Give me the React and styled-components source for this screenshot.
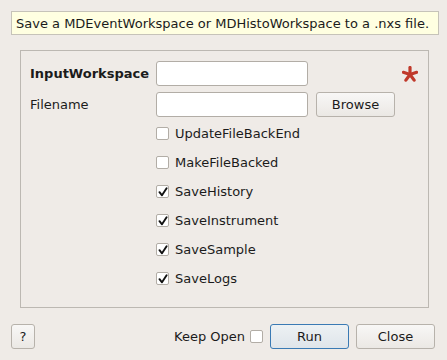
import React from "react";
import styled, { createGlobalStyle } from "styled-components";

const Global = createGlobalStyle`
  html, body { margin: 0; padding: 0; background: #efebe7; }
  body { font-family: "DejaVu Sans", "Liberation Sans", sans-serif; font-size: 13px; color: #1b1b1b; }
`;

const Dialog = styled.div`
  width: 447px;
  height: 360px;
  box-sizing: border-box;
  padding: 11px 9px 0 11px;
  display: flex;
  flex-direction: column;
`;

const Banner = styled.div`
  height: 24px;
  box-sizing: border-box;
  border: 1px solid #c6c3b9;
  background: #ffffe1;
  display: flex;
  align-items: center;
  padding-left: 4px;
  white-space: nowrap;
  margin-right: -1px;
`;

const Group = styled.div`
  margin: 15px 9px 0 9px;
  height: 258px;
  box-sizing: border-box;
  border: 1px solid #bcb8b2;
  padding: 10px 0 0 9px;
  display: flex;
  flex-direction: column;
`;

const FieldRow = styled.div`
  height: 25px;
  display: flex;
  align-items: center;
  margin-bottom: ${(p) => p.$gap || 0}px;
`;

const Label = styled.div`
  width: 126px;
  font-weight: ${(p) => (p.$bold ? 700 : 400)};
  white-space: nowrap;
`;

const TextInput = styled.div`
  width: 152px;
  height: 25px;
  box-sizing: border-box;
  border: 1px solid #b2ada6;
  border-radius: 3px;
  background: #ffffff;
`;

const Button = styled.button`
  width: ${(p) => p.$w || 79}px;
  height: 25px;
  box-sizing: border-box;
  border: 1px solid ${(p) => (p.$primary ? "#3a7ab4" : "#b7b2ab")};
  border-radius: 3px;
  background: ${(p) =>
    p.$primary
      ? "linear-gradient(#edf1f4, #dfe5ea)"
      : "linear-gradient(#f8f7f6, #ebe8e4)"};
  font-family: "DejaVu Sans", "Liberation Sans", sans-serif;
  font-size: 13px;
  color: #1b1b1b;
  padding: 0;
  margin-left: ${(p) => p.$ml || 0}px;
`;

const Star = styled.svg`
  margin-left: 6px;
  width: 16px;
  height: 16px;
`;

const CheckRow = styled.div`
  height: 23px;
  display: flex;
  align-items: center;
  padding-left: 126px;
  margin-top: ${(p) => p.$mt || 6}px;
  gap: 6px;
`;

const Box = styled.div`
  width: 13px;
  height: 13px;
  box-sizing: border-box;
  border: 1px solid #b2ada6;
  border-radius: 2px;
  background: #ffffff;
  display: flex;
  align-items: center;
  justify-content: center;
`;

const Footer = styled.div`
  margin-top: 16px;
  display: flex;
  align-items: center;
  padding-right: 3px;
`;

const Spacer = styled.div`
  flex: 1;
`;

const KeepLabel = styled.span`
  margin-right: 5px;
`;

function Check({ checked }) {
  return (
    <Box>
      {checked && (
        <svg width="10" height="10" viewBox="0 0 10 10">
          <path d="M1.5 5.2 L4 8.3 L8.6 1.2" fill="none" stroke="#111" strokeWidth="1.9" strokeLinecap="round" strokeLinejoin="round" />
        </svg>
      )}
    </Box>
  );
}

const checks = [
  ["UpdateFileBackEnd", false],
  ["MakeFileBacked", false],
  ["SaveHistory", true],
  ["SaveInstrument", true],
  ["SaveSample", true],
  ["SaveLogs", true],
];

export default function App() {
  return (
    <>
      <Global />
      <Dialog>
        <Banner>Save a MDEventWorkspace or MDHistoWorkspace to a .nxs file.</Banner>
        <Group>
          <FieldRow $gap={6}>
            <Label $bold>InputWorkspace</Label>
            <TextInput />
            <Spacer />
            <Star viewBox="0 0 16 16" style={{ marginRight: 10 }}>
              {[0, 72, 144, 216, 288].map((a) => (
                <line key={a} x1="8" y1="8.5" x2="8" y2="1.5" stroke="#c0392b" strokeWidth="3.2" strokeLinecap="round" transform={`rotate(${a} 8 8.5)`} />
              ))}
            </Star>
          </FieldRow>
          <FieldRow>
            <Label>Filename</Label>
            <TextInput />
            <Button $ml={8}>Browse</Button>
          </FieldRow>
          {checks.map(([name, c], i) => (
            <CheckRow key={name} $mt={i === 0 ? 5 : 6}>
              <Check checked={c} />
              <span>{name}</span>
            </CheckRow>
          ))}
        </Group>
        <Footer>
          <Button $w={24}>?</Button>
          <Spacer />
          <KeepLabel>Keep Open</KeepLabel>
          <Box />
          <Button $primary $ml={7}>Run</Button>
          <Button $ml={7}>Close</Button>
        </Footer>
      </Dialog>
    </>
  );
}
